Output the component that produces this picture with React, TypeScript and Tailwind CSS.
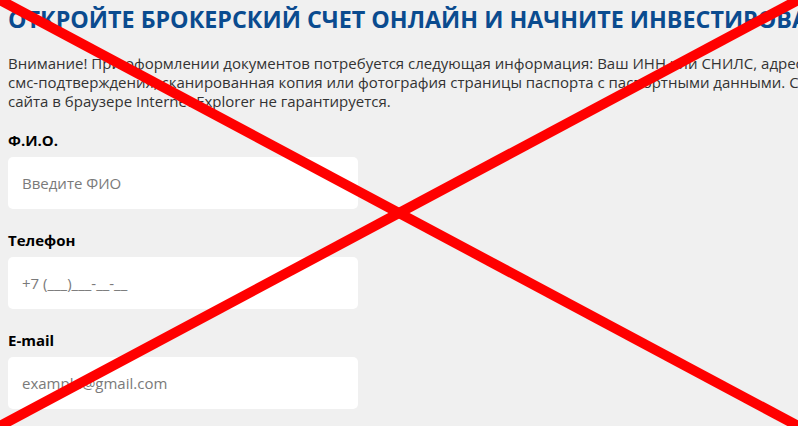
import React from "react";

function Field({ label, placeholder }: { label: string; placeholder: string }) {
  return (
    <div className="flex flex-col">
      <div className="text-[15px] leading-[20px] font-bold text-black">{label}</div>
      <div className="mt-[7px] w-[350px] h-[52px] rounded-[5px] bg-white flex items-center pl-[14px] text-[15px] text-[#7a7a7a]">
        {placeholder}
      </div>
    </div>
  );
}

export default function App() {
  return (
    <div
      className="relative w-[798px] h-[426px] overflow-hidden bg-[#f0f0f0]"
      style={{ fontFamily: '"Open Sans", "Noto Sans", sans-serif' }}
    >
      <div className="pl-[8px] pt-[3px] flex flex-col">
        <h1 className="whitespace-nowrap text-[23.3px] leading-[32px] font-bold text-[#0a4b8f] uppercase">
          Откройте брокерский счет онлайн и начните инвестировать
        </h1>
        <p className="mt-[19px] whitespace-nowrap text-[15px] leading-[19px] text-[#333333]">
          Внимание! При оформлении документов потребуется следующая информация: Ваш ИНН или СНИЛС, адрес
          <br />
          смс-подтверждения, сканированная копия или фотография страницы паспорта с паспортными данными. С
          <br />
          сайта в браузере Internet Explorer не гарантируется.
        </p>
        <div className="mt-[19px] flex flex-col gap-[21px]">
          <Field label="Ф.И.О." placeholder="Введите ФИО" />
          <Field label="Телефон" placeholder="+7 (___)___-__-__" />
          <Field label="E-mail" placeholder="example@gmail.com" />
        </div>
      </div>
      <svg className="absolute inset-0" width="798" height="426" viewBox="0 0 798 426">
        <line x1="0" y1="0" x2="798" y2="426" stroke="#ff0000" strokeWidth="10" />
        <line x1="798" y1="0" x2="0" y2="426" stroke="#ff0000" strokeWidth="10" />
      </svg>
    </div>
  );
}
